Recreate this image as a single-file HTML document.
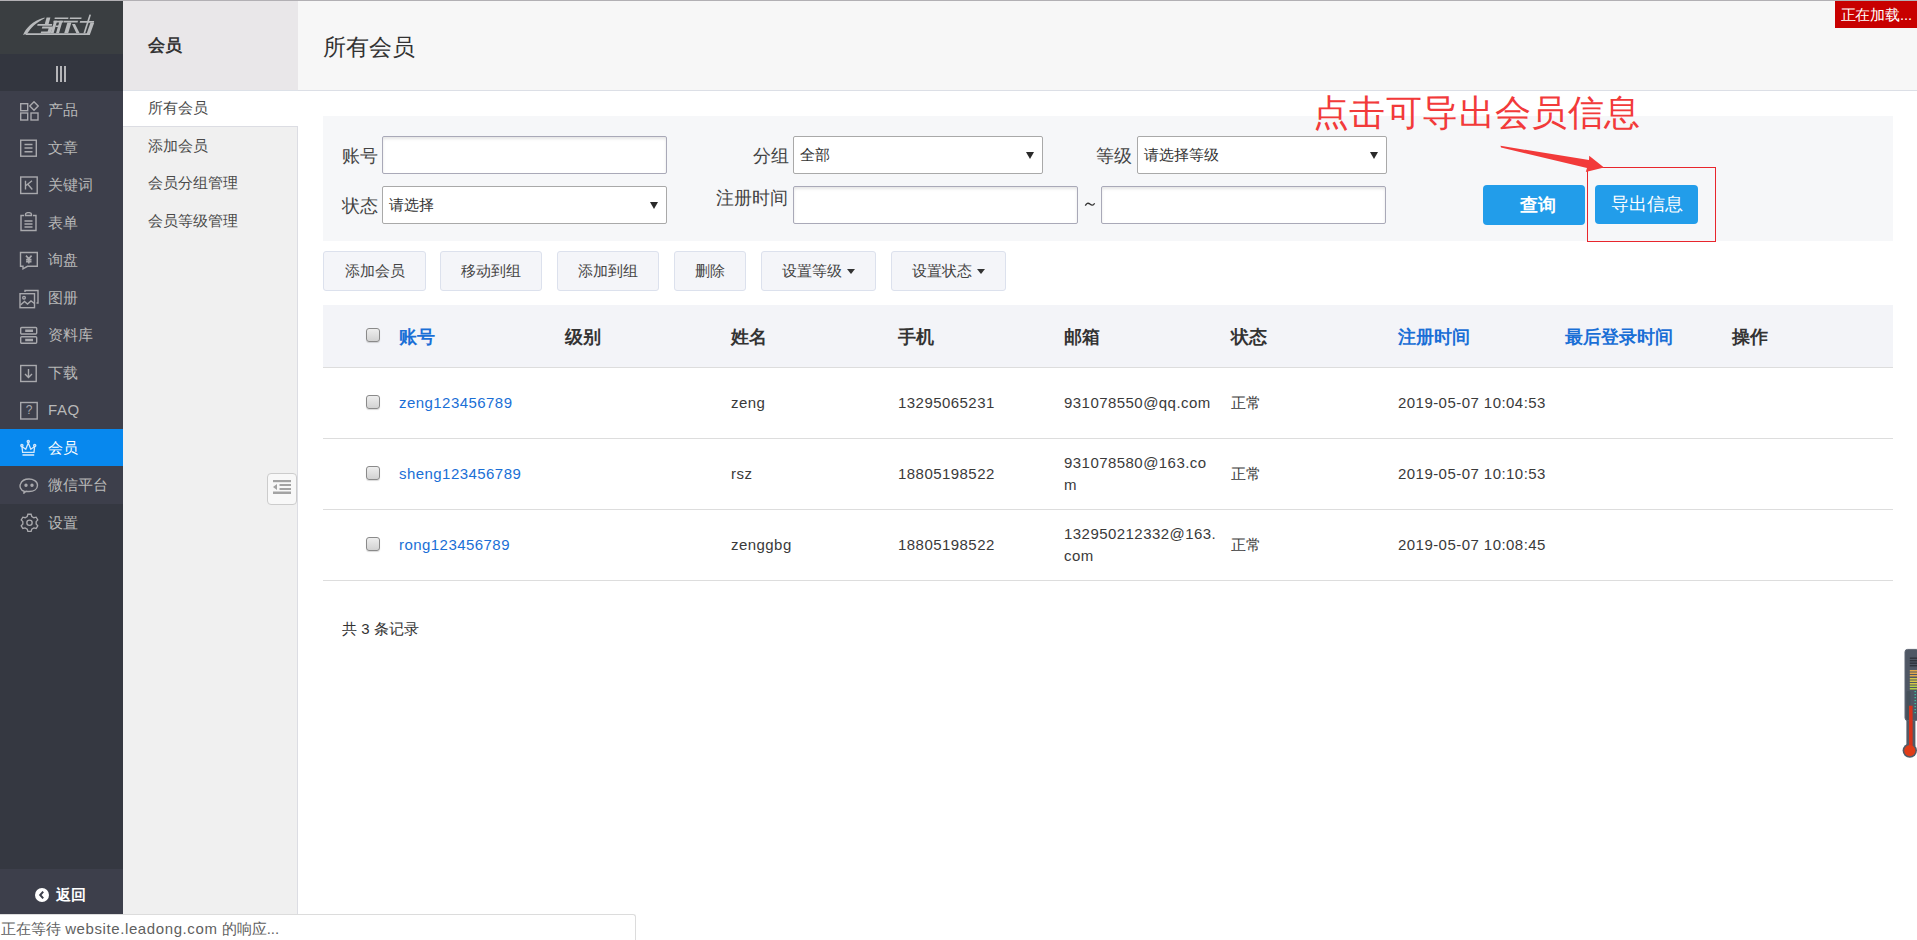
<!DOCTYPE html>
<html><head><meta charset="utf-8">
<style>
*{box-sizing:border-box;margin:0;padding:0}
html,body{width:1917px;height:940px;overflow:hidden;background:#fff;font-family:"Liberation Sans",sans-serif;color:#333}
.abs{position:absolute}
#topline{left:0;top:0;width:1917px;height:1px;background:#b2b0b4}
#sb{left:0;top:1px;width:123px;height:914px;background:#353841}
#logo{left:0;top:1px;width:123px;height:53px;background:#3a3e41}
#ham{left:0;top:54px;width:123px;height:37px;background:#33363f}
#menu{left:0;top:91px;width:123px;height:412.5px;background:#3d3f4b}
.mi{position:absolute;left:0;width:123px;height:37.5px;color:#b8b8b8;font-size:15px;line-height:37.5px}
.mi span{position:absolute;left:48px;top:0}
.mi svg{position:absolute;left:19px;top:10px}
.mi.on{background:#0788ee;color:#fff}
#back{left:0;top:869px;width:123px;height:46px;background:#3d3f4b;color:#fff;font-size:15px}
#col2h{left:123px;top:1px;width:175px;height:90px;background:#e9e7e9;border-bottom:1px solid #dde1e8}
#col2{left:123px;top:91px;width:175px;height:824px;background:#f0f0f0;border-right:1px solid #dcdde3}
.c2{position:absolute;left:148px;font-size:15px;color:#4a4a4a;line-height:20px}
#mainh{left:298px;top:1px;width:1619px;height:90px;background:#f7f7f7;border-bottom:1px solid #dcdfe6}
#filter{left:323px;top:116px;width:1570px;height:125px;background:#f6f7f9}
.lbl{position:absolute;font-size:18px;color:#444;line-height:24px}
.inp{position:absolute;height:38px;background:#fff;border:1px solid #a9a9b8;border-radius:2px;box-shadow:inset 0 2px 3px rgba(0,0,0,.10)}
.sel{position:absolute;height:38px;background:#fff;border:1px solid #a9a9a9;border-radius:2px;font-size:15px;color:#333;line-height:36px;padding-left:6px}
.sel i{position:absolute;right:8px;top:15px;width:0;height:0;border-left:4px solid transparent;border-right:4px solid transparent;border-top:7px solid #2a2a2a}
.bb{position:absolute;height:40px;background:#229dea;border-radius:4px;color:#fff;font-size:18px;line-height:40px;text-align:center}
.ab{position:absolute;top:251px;height:40px;background:#f4f5f9;border:1px solid #dce1ed;border-radius:3px;font-size:15px;color:#444;line-height:38px;text-align:center}
.caret{display:inline-block;width:0;height:0;border-left:4px solid transparent;border-right:4px solid transparent;border-top:5px solid #333;vertical-align:middle;margin-left:5px;position:relative;top:-1px}
#thead{left:323px;top:305px;width:1570px;height:63px;background:#f3f4f8;border-bottom:1px solid #dddddd}
.th{position:absolute;top:325px;font-size:18px;font-weight:bold;color:#333;line-height:24px}
.th.b{color:#1a6fd6}
.rowb{position:absolute;left:323px;width:1570px;height:1px;background:#dddddd}
.td{position:absolute;font-size:15px;color:#3a3a3a;line-height:22px;letter-spacing:0.45px}
.td.a{color:#1a6fd6}
.cb{position:absolute;left:366px;width:14px;height:14px;border:1px solid #8a8a8a;border-radius:3px;background:linear-gradient(#eeeeee,#d2d2d2);box-shadow:0 1px 1px rgba(0,0,0,.15)}
</style></head><body>
<div id="topline" class="abs"></div>
<div id="sb" class="abs"></div>
<div id="logo" class="abs"></div>
<div id="ham" class="abs"></div>
<div id="menu" class="abs"></div>
<div id="col2h" class="abs"></div>
<div id="col2" class="abs"></div>
<div id="mainh" class="abs"></div>
<div id="back" class="abs"></div>
<svg class="abs" style="left:20px;top:10px" width="80" height="32" viewBox="20 10 80 32"><g fill="#b8babc">
<path d="M23 34.9 C26 28 32 21 44.5 17.4 L44.7 18.3 C36 22.5 31 28 27.3 33.5 Z"/>
<path d="M26 33.2 H88.6 L88.2 35 H25.4 Z"/>
<path d="M54.8 17.5 H68.5 L68.2 19 H54.5 Z"/>
<path d="M70 17.5 H81.6 L81.3 19 H69.7 Z"/>
<path d="M46.6 17.4 L50.4 17.4 L48.6 24 L44.8 24 Z"/>
<path d="M37.6 23.9 H52.2 L51.8 25.7 H37.2 Z"/>
<path d="M42.4 26.4 H53 L50.6 33.3 H40.6 L41.2 31.4 H47.6 L48.6 28.4 H41.8 Z"/>
<path d="M53.6 20.8 H63.6 L63.2 22.6 H53.2 Z"/>
<path d="M54.2 20.8 L57.2 20.8 L53.6 33.3 L50.6 33.3 Z"/>
<path d="M59.6 20.8 L62.6 20.8 L59 33.3 L56 33.3 Z"/>
<path d="M55.8 25.6 H60.4 L60 27 H55.4 Z"/>
<path d="M64 20.8 H78 L77.6 22.6 H63.6 Z"/>
<path d="M67.4 22.6 L71.4 22.6 L68.2 33.3 L64.2 33.3 Z"/>
<path d="M72 24 L75 24 L79.6 33.3 L76.4 33.3 Z"/>
<path d="M80.2 20.9 H94.2 L93.7 22.7 H79.7 Z"/>
<path d="M90.4 22.7 L94.2 22.7 L89.8 35 L86.2 35 Z"/>
<path d="M89.4 14.4 L91 14.8 L85.2 33.3 L83.4 33.3 Z"/>
</g></svg>
<div class="abs" style="left:56px;top:66px;width:2px;height:16px;background:#b5b5b8"></div>
<div class="abs" style="left:60px;top:66px;width:2px;height:16px;background:#b5b5b8"></div>
<div class="abs" style="left:64px;top:66px;width:2px;height:16px;background:#b5b5b8"></div>

<div class="mi" style="top:91px"><svg width="20" height="20" viewBox="0 0 20 20" fill="none" stroke="#a9a9ad" stroke-width="1.4"><rect x="1.7" y="2.7" width="7" height="7"/><rect x="1.7" y="12" width="7" height="7"/><rect x="12" y="12" width="7" height="7"/><path d="M15 0.8 L19.2 5 L15 9.2 L10.8 5 Z"/></svg><span>产品</span></div>
<div class="mi" style="top:128.5px"><svg width="20" height="20" viewBox="0 0 20 20" fill="none" stroke="#a9a9ad" stroke-width="1.4"><rect x="1.7" y="1.2" width="15.6" height="16"/><path d="M5.5 5.5 H13.5 M5.5 9 H13.5 M5.5 12.7 H13.5"/></svg><span>文章</span></div>
<div class="mi" style="top:166px"><svg width="20" height="20" viewBox="0 0 20 20" fill="none" stroke="#a9a9ad" stroke-width="1.4"><rect x="1.7" y="1" width="16.5" height="16.5"/><path d="M6.5 4.8 V13.5 M13 4.8 L7 9.5 M8.8 8.3 L13.3 13.5"/></svg><span>关键词</span></div>
<div class="mi" style="top:203.5px"><svg style="top:8px" width="20" height="20" viewBox="0 0 20 20" fill="none" stroke="#a9a9ad" stroke-width="1.4"><path d="M5 3.5 H2 V18.5 H17 V3.5 H14 M6.5 3.5 V2.5 C6.5 0 12.5 0 12.5 2.5 V3.5 Z"/><path d="M5.5 9 H13.5 M5.5 12 H13.5 M5.5 15 H13.5"/></svg><span>表单</span></div>
<div class="mi" style="top:241px"><svg width="20" height="20" viewBox="0 0 20 20" fill="none" stroke="#a9a9ad" stroke-width="1.4"><path d="M1.5 1.5 H18.3 V15.3 H8.5 L4 17.8 V15.3 H1.5 Z"/><path d="M7 4.6 L9.8 7.8 L12.6 4.6 M9.8 7.8 V12.5 M7.1 8.6 H12.5 M7.1 10.6 H12.5" stroke-width="1.6"/></svg><span>询盘</span></div>
<div class="mi" style="top:278.5px"><svg width="20" height="20" viewBox="0 0 20 20" fill="none" stroke="#a9a9ad" stroke-width="1.4"><path d="M6 3 V1.5 H19 V14 H17.5"/><rect x="1" y="4.7" width="14.5" height="14"/><circle cx="5" cy="8.7" r="1.3"/><path d="M1.5 16 L5.5 12.5 L8.5 15 L12 12 L15.5 14.5"/></svg><span>图册</span></div>
<div class="mi" style="top:316px"><svg width="20" height="20" viewBox="0 0 20 20" fill="none" stroke="#a9a9ad" stroke-width="1.4"><rect x="1.7" y="1.5" width="16" height="6.5" rx="1"/><rect x="1.7" y="10.8" width="16" height="6.5" rx="1"/><path d="M6.2 4.8 H14 M6.2 14 H14" stroke-width="2.4"/></svg><span>资料库</span></div>
<div class="mi" style="top:353.5px"><svg width="20" height="20" viewBox="0 0 20 20" fill="none" stroke="#a9a9ad" stroke-width="1.4"><rect x="1.7" y="1.5" width="15.5" height="16"/><path d="M9.5 5 V13.5 M6 10 L9.5 13.5 L13 10"/></svg><span>下载</span></div>
<div class="mi" style="top:391px"><svg width="20" height="20" viewBox="0 0 20 20" fill="none" stroke="#a9a9ad" stroke-width="1.4"><rect x="1.7" y="1.5" width="16.5" height="16.5"/><text x="10" y="13" font-size="12" text-anchor="middle" fill="#a9a9ad" stroke="none" font-family="Liberation Sans">?</text></svg><span style="letter-spacing:0.6px">FAQ</span></div>
<div class="mi on" style="top:428.5px"><svg width="20" height="20" viewBox="0 0 20 20" fill="none" stroke="#d2e8fc" stroke-width="1.3"><path d="M3.6 13.3 L3 7.5 L6.8 10.2 L9.3 3.8 L11.8 10.2 L15.6 7.5 L15 13.3 Z"/><circle cx="9.3" cy="2.4" r="1.1"/><circle cx="2.9" cy="6.4" r="1.1"/><circle cx="15.7" cy="6.4" r="1.1"/><path d="M3.5 16 H15.2" stroke-width="1.6"/></svg><span>会员</span></div>
<div class="mi" style="top:466px"><svg width="20" height="20" viewBox="0 0 20 20" fill="none" stroke="#a9a9ad" stroke-width="1.4"><path d="M5.5 15.5 C1 14 0.5 10 1.5 8 C3 4 7 3 10 3 C14 3 18.5 5 18.5 9.3 C18.5 13.5 14.5 15.5 10 15.5 C8.5 15.5 7.5 15.3 7 15.2 L4.5 17.5 Z"/><circle cx="7" cy="9.2" r="1" fill="#a9a9ad"/><circle cx="13" cy="9.2" r="1" fill="#a9a9ad"/></svg><span>微信平台</span></div>
<div class="mi" style="top:503.5px"><svg style="left:19.5px;top:9.5px" width="19" height="19" viewBox="0 0 20 20" fill="none" stroke="#a9a9ad" stroke-width="1.4"><path d="M8.3 1.3 H11.7 L12.4 3.7 L14.6 5 L17 4.4 L18.7 7.3 L17 9.1 V11.6 L18.7 13.4 L17 16.3 L14.6 15.7 L12.4 17 L11.7 19.4 H8.3 L7.6 17 L5.4 15.7 L3 16.3 L1.3 13.4 L3 11.6 V9.1 L1.3 7.3 L3 4.4 L5.4 5 L7.6 3.7 Z"/><circle cx="10" cy="10.3" r="2.8"/></svg><span>设置</span></div>

<div class="abs" style="left:35px;top:888px;width:14px;height:14px;border-radius:50%;background:#fff"></div>
<svg class="abs" style="left:35px;top:888px" width="14" height="14" viewBox="0 0 14 14"><path d="M8.2 3.6 L5.2 7 L8.2 10.4" fill="none" stroke="#3d3f4b" stroke-width="2"/></svg>
<div class="abs" style="left:56px;top:885px;font-size:15px;color:#fff;line-height:20px;font-weight:bold">返回</div>

<div class="abs" style="left:148px;top:35px;font-size:17px;font-weight:bold;color:#333;line-height:22px">会员</div>
<div class="abs" style="left:123px;top:91px;width:175px;height:35px;background:#fff"></div>
<div class="abs" style="left:123px;top:126px;width:174px;height:1px;background:#dcdde3"></div>
<div class="c2" style="top:98px">所有会员</div>
<div class="c2" style="top:136px">添加会员</div>
<div class="c2" style="top:173px">会员分组管理</div>
<div class="c2" style="top:211px">会员等级管理</div>
<div class="abs" style="left:267px;top:473px;width:30px;height:32px;background:#f8f8f8;border:1px solid #cccccc;border-radius:4px"></div>
<svg class="abs" style="left:267px;top:473px" width="30" height="32" viewBox="0 0 30 32"><g fill="#a3a3a3"><rect x="6" y="7" width="18" height="2.2"/><rect x="12.5" y="11" width="11.5" height="2"/><rect x="12.5" y="15" width="11.5" height="2"/><rect x="6" y="18.5" width="18" height="2.5"/><path d="M6 14 L10 11 L10 17 Z"/></g></svg>

<div class="abs" style="left:323px;top:33.5px;font-size:22.5px;color:#333;line-height:28px">所有会员</div>
<div class="abs" style="left:1835px;top:1px;width:82px;height:27px;background:#c80000;color:#fff;font-size:14.7px;line-height:29px;padding-left:5.5px;letter-spacing:-0.1px">正在加载...</div>

<div id="filter" class="abs"></div>
<div class="lbl" style="left:342px;top:144px">账号</div>
<div class="inp" style="left:382px;top:136px;width:285px"></div>
<div class="lbl" style="left:753px;top:144px">分组</div>
<div class="sel" style="left:793px;top:136px;width:250px">全部<i></i></div>
<div class="lbl" style="left:1096px;top:144px">等级</div>
<div class="sel" style="left:1137px;top:136px;width:250px">请选择等级<i></i></div>
<div class="lbl" style="left:342px;top:194px">状态</div>
<div class="sel" style="left:382px;top:186px;width:285px">请选择<i></i></div>
<div class="lbl" style="left:716px;top:186px">注册时间</div>
<div class="inp" style="left:793px;top:186px;width:285px"></div>
<svg class="abs" style="left:1080px;top:198px" width="20" height="12" viewBox="1080 198 20 12"><path d="M1085.3 205.6 C1086.5 203.2 1088 202.6 1089.8 203.9 C1091.3 205 1093 206.3 1094.6 203.2" fill="none" stroke="#333" stroke-width="1.3"/></svg>
<div class="inp" style="left:1101px;top:186px;width:285px"></div>
<div class="bb" style="left:1483px;top:185px;width:102px;font-weight:bold;text-indent:7px">查询</div>
<div class="bb" style="left:1595px;top:185px;width:103px;height:39px;line-height:39px">导出信息</div>

<div class="abs" style="left:1313px;top:91px;font-family:'Liberation Serif',serif;font-size:36px;font-weight:300;color:#f23a3a;line-height:44px;letter-spacing:0.4px">点击可导出会员信息</div>
<div class="abs" style="left:1587px;top:167px;width:129px;height:75px;border:1px solid #e8262d"></div>
<svg class="abs" style="left:1490px;top:140px" width="130" height="40" viewBox="1490 140 130 40"><path d="M1500.5 145.8 L1589 160 L1589.2 155.8 L1604 167.4 L1585.8 172 L1587 168 L1501 147.6 Z" fill="#f23a3a"/></svg>

<div class="ab" style="left:323px;width:103px">添加会员</div>
<div class="ab" style="left:440px;width:102px">移动到组</div>
<div class="ab" style="left:557px;width:102px">添加到组</div>
<div class="ab" style="left:674px;width:72px">删除</div>
<div class="ab" style="left:761px;width:115px">设置等级<span class="caret"></span></div>
<div class="ab" style="left:891px;width:115px">设置状态<span class="caret"></span></div>

<div id="thead" class="abs"></div>
<div class="cb" style="top:328px"></div>
<div class="th b" style="left:399px">账号</div>
<div class="th" style="left:565px">级别</div>
<div class="th" style="left:731px">姓名</div>
<div class="th" style="left:898px">手机</div>
<div class="th" style="left:1064px">邮箱</div>
<div class="th" style="left:1231px">状态</div>
<div class="th b" style="left:1398px">注册时间</div>
<div class="th b" style="left:1565px">最后登录时间</div>
<div class="th" style="left:1732px">操作</div>

<div class="cb" style="top:395px"></div>
<div class="td a" style="left:399px;top:392px">zeng123456789</div>
<div class="td" style="left:731px;top:392px">zeng</div>
<div class="td" style="left:898px;top:392px">13295065231</div>
<div class="td" style="left:1064px;top:392px">931078550@qq.com</div>
<div class="td" style="left:1231px;top:392px">正常</div>
<div class="td" style="left:1398px;top:392px">2019-05-07 10:04:53</div>
<div class="rowb" style="top:438px"></div>

<div class="cb" style="top:466px"></div>
<div class="td a" style="left:399px;top:463px">sheng123456789</div>
<div class="td" style="left:731px;top:463px">rsz</div>
<div class="td" style="left:898px;top:463px">18805198522</div>
<div class="td" style="left:1064px;top:452px">931078580@163.co<br>m</div>
<div class="td" style="left:1231px;top:463px">正常</div>
<div class="td" style="left:1398px;top:463px">2019-05-07 10:10:53</div>
<div class="rowb" style="top:509px"></div>

<div class="cb" style="top:537px"></div>
<div class="td a" style="left:399px;top:534px">rong123456789</div>
<div class="td" style="left:731px;top:534px">zenggbg</div>
<div class="td" style="left:898px;top:534px">18805198522</div>
<div class="td" style="left:1064px;top:523px">132950212332@163.<br>com</div>
<div class="td" style="left:1231px;top:534px">正常</div>
<div class="td" style="left:1398px;top:534px">2019-05-07 10:08:45</div>
<div class="rowb" style="top:580px"></div>

<div class="abs" style="left:342px;top:619px;font-size:15px;color:#333;line-height:20px">共 3 条记录</div>

<div class="abs" style="left:0;top:914px;width:636px;height:26px;background:#fff;border-top:1px solid #dcdcdc;border-right:1px solid #dcdcdc;border-top-right-radius:3px"></div>
<div class="abs" style="left:1px;top:918.5px;font-size:15px;color:#5f5f5f;line-height:20px">正在等待 <span style="letter-spacing:0.6px">website.leadong.com</span> 的响应...</div>

<svg class="abs" style="left:1900px;top:640px" width="17" height="130" viewBox="0 0 17 130">
<rect x="6.4" y="76" width="9" height="30" fill="#525a66"/>
<circle cx="9.8" cy="110.6" r="7.2" fill="#525a66"/>
<rect x="5" y="9.4" width="14" height="71" rx="2.5" fill="#4f5764" stroke="#5d6572" stroke-width="1"/>
<g fill="#2f333b"><rect x="9.8" y="17.5" width="8" height="1.4"/><rect x="9.8" y="20" width="8" height="1.4"/><rect x="9.8" y="22.5" width="8" height="1.4"/><rect x="9.8" y="25" width="8" height="1.4"/></g>
<g fill="#e2a84a"><rect x="9.8" y="30" width="8" height="1.5"/><rect x="9.8" y="32.5" width="8" height="1.5"/><rect x="9.8" y="35" width="8" height="1.5"/></g>
<g fill="#d8c848"><rect x="9.8" y="38" width="8" height="1.5"/><rect x="9.8" y="40.5" width="8" height="1.5"/><rect x="9.8" y="43" width="8" height="1.5"/></g>
<g fill="#b8d048"><rect x="9.8" y="45.5" width="8" height="1.5"/><rect x="9.8" y="48" width="8" height="1.5"/></g>
<rect x="6.5" y="51" width="4" height="29" rx="1.5" fill="#46505a"/>
<g fill="#3fbf9f"><rect x="14.5" y="51" width="1.5" height="1.2"/><rect x="14.5" y="54" width="1.5" height="1.2"/><rect x="14.5" y="57" width="1.5" height="1.2"/><rect x="14.5" y="60" width="1.5" height="1.2"/><rect x="14.5" y="63" width="1.5" height="1.2"/><rect x="14.5" y="66" width="1.5" height="1.2"/><rect x="14.5" y="69" width="1.5" height="1.2"/><rect x="14.5" y="72" width="1.5" height="1.2"/></g>
<rect x="9" y="65.7" width="3.6" height="45" fill="#d8321a"/>
<circle cx="9.8" cy="110.6" r="5.6" fill="#e03c18"/>
</svg>

</body></html>
